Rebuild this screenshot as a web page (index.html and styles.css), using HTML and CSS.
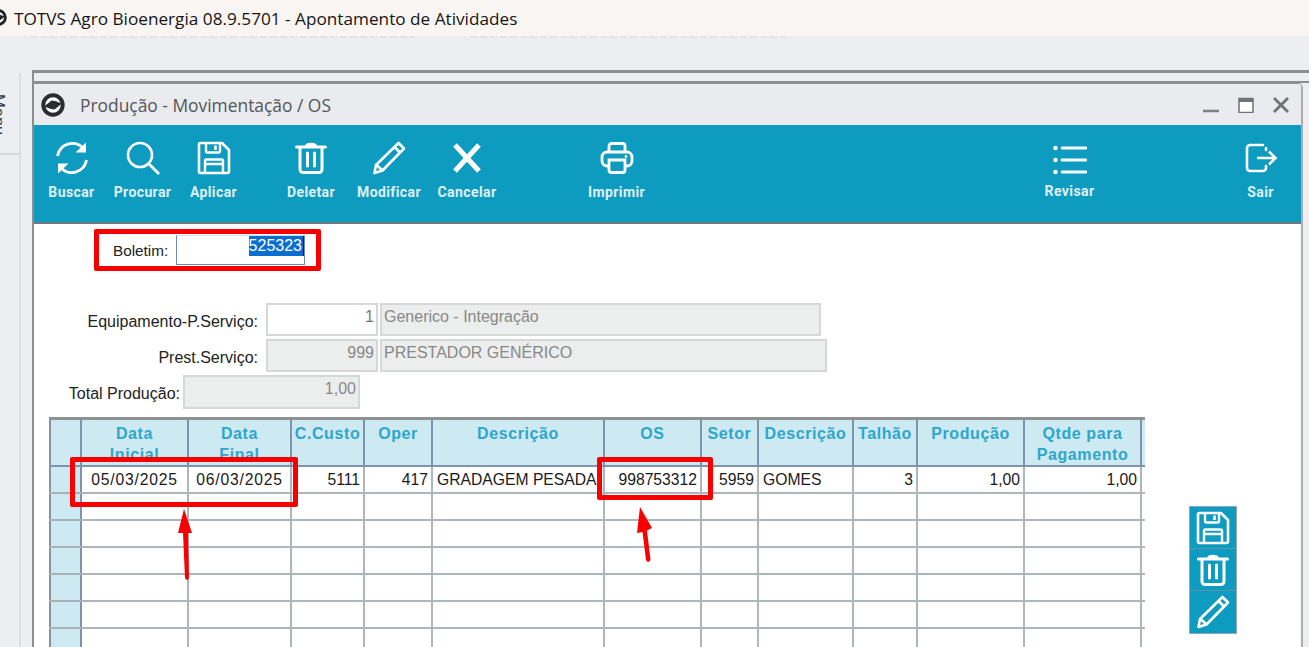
FILE: index.html
```html
<!DOCTYPE html>
<html lang="pt">
<head>
<meta charset="utf-8">
<title>TOTVS Agro Bioenergia</title>
<link rel="stylesheet" href="styles.css">
</head>
<body>
<svg class="defs" width="0" height="0" aria-hidden="true">
  <symbol id="i-logo" viewBox="0 0 24 24">
    <circle cx="12" cy="12" r="9.700" fill="#fff" stroke="currentColor" stroke-width="4"/>
    <path d="M3 13.500 10.500 7.500 14 8 21 10.500 13.500 16.500 10 16z" fill="currentColor"/>
  </symbol>
  <symbol id="i-save" viewBox="0 0 34 34">
    <path d="M2 3.500A1.500 1.500 0 0 1 3.500 2H25l7 7v21.500a1.500 1.500 0 0 1-1.500 1.500h-27A1.500 1.500 0 0 1 2 30.500z" fill="none" stroke="#fff" stroke-width="2.600" stroke-linejoin="round"/>
    <path d="M9 2v8a1.500 1.500 0 0 0 1.500 1.500h11A1.500 1.500 0 0 0 23 10V2M8 32V20a1.500 1.500 0 0 1 1.500-1.500h15A1.500 1.500 0 0 1 26 20v12M8 23h18" fill="none" stroke="#fff" stroke-width="2.400"/>
    <path d="M18.500 4.500v4.500" stroke="#fff" stroke-width="2.600"/>
  </symbol>
  <symbol id="i-trash" viewBox="0 0 34 34">
    <path d="M2.500 6h29" stroke="#fff" stroke-width="3" stroke-linecap="round"/>
    <path d="M12 5c.5-3 9.500-3 10 0" fill="#fff" stroke="#fff" stroke-width="2"/>
    <path d="M6 7v21.500a3 3 0 0 0 3 3h16a3 3 0 0 0 3-3V7" fill="none" stroke="#fff" stroke-width="3"/>
    <path d="M13.500 12v13M20.500 12v13" stroke="#fff" stroke-width="3" stroke-linecap="round"/>
  </symbol>
  <symbol id="i-pencil" viewBox="0 0 34 34">
    <path d="M26.500 2 32 7.500 10.500 29.500 2.500 32l1.500-8zM22.500 6l5.500 5.500M4.500 24l5.500 5" fill="none" stroke="#fff" stroke-width="2.600" stroke-linejoin="round"/>
  </symbol>
</svg>

<header class="app-title">
  <svg class="app-logo"><use href="#i-logo"/></svg>
  <span>TOTVS Agro Bioenergia 08.9.5701 - Apontamento de Atividades</span>
</header>
<div class="ghost"><i></i><i></i></div>

<div class="desk">
  <aside class="side-menu"><div class="side-tab"><span class="side-label">Menu</span></div></aside>
  <main class="mdi">
    <section class="window">
      <div class="win-title">
        <svg class="win-logo"><use href="#i-logo"/></svg>
        <span class="win-name">Produção - Movimentação / OS</span>
        <div class="win-controls">
          <svg width="16" height="16" viewBox="0 0 16 16"><path d="M0 14h16" stroke="#7c7f83" stroke-width="2.400"/></svg>
          <svg width="16" height="16" viewBox="0 0 16 16"><path d="M1 1.500h14v14H1z" fill="#fff" stroke="#6f7276" stroke-width="1.500"/><path d="M1 3h14" stroke="#6f7276" stroke-width="4"/></svg>
          <svg width="16" height="16" viewBox="0 0 16 16"><path d="M1 1l14 14M15 1 1 15" stroke="#6f7276" stroke-width="2.800"/></svg>
        </div>
      </div>

      <nav class="toolbar">
        <button class="tool">
          <svg class="tool-icon" viewBox="0 0 34 34"><path d="M2.500 15A15 15 0 0 1 28 7M31.500 19A15 15 0 0 1 6 27" fill="none" stroke="#fff" stroke-width="2.800"/><path d="M20.500 11.500H31V1.500zM13.500 22.500H3v10z" fill="#fff"/></svg>
          <span>Buscar</span>
        </button>
        <button class="tool">
          <svg class="tool-icon" viewBox="0 0 34 34"><circle cx="14" cy="14" r="12" fill="none" stroke="#fff" stroke-width="2.600"/><path d="M22.500 22.500 33 33" stroke="#fff" stroke-width="2.800"/></svg>
          <span>Procurar</span>
        </button>
        <button class="tool">
          <svg class="tool-icon"><use href="#i-save"/></svg>
          <span>Aplicar</span>
        </button>
        <div class="tool-group">
          <button class="tool wide">
            <svg class="tool-icon"><use href="#i-trash"/></svg>
            <span>Deletar</span>
          </button>
          <button class="tool wide">
            <svg class="tool-icon"><use href="#i-pencil"/></svg>
            <span>Modificar</span>
          </button>
          <button class="tool wide">
            <svg class="tool-icon" viewBox="0 0 34 34"><path d="M5 4l24 26M29 4 5 30" stroke="#fff" stroke-width="5"/></svg>
            <span>Cancelar</span>
          </button>
        </div>
        <button class="tool print">
          <svg class="tool-icon" viewBox="0 0 34 34"><path d="M9 11V5a2.500 2.500 0 0 1 2.500-2.500h11A2.500 2.500 0 0 1 25 5v6" fill="none" stroke="#fff" stroke-width="2.800"/><path d="M9 25H7a5 5 0 0 1-5-5v-4a5 5 0 0 1 5-5h20a5 5 0 0 1 5 5v4a5 5 0 0 1-5 5h-2" fill="none" stroke="#fff" stroke-width="2.800"/><path d="M9 19h16v10a2.500 2.500 0 0 1-2.500 2.500h-11A2.500 2.500 0 0 1 9 29z" fill="none" stroke="#fff" stroke-width="2.800"/><circle cx="26" cy="15.500" r="1.400" fill="#fff"/></svg>
          <span>Imprimir</span>
        </button>
        <button class="tool review">
          <svg class="tool-icon" viewBox="0 0 34 34"><path d="M9 7h24M9 19h24M9 31h24" stroke="#fff" stroke-width="2.800" stroke-linecap="round"/><circle cx="2.500" cy="7" r="2.200" fill="#fff"/><circle cx="2.500" cy="19" r="2.200" fill="#fff"/><circle cx="2.500" cy="31" r="2.200" fill="#fff"/></svg>
          <span>Revisar</span>
        </button>
        <button class="tool">
          <svg class="tool-icon" viewBox="0 0 34 34"><path d="M19 4H6a3 3 0 0 0-3 3v20a3 3 0 0 0 3 3h13a3 3 0 0 0 3-3v-2M22 9V7" fill="none" stroke="#fff" stroke-width="2.600" stroke-linecap="round"/><path d="M13 17h18M25 10.500l6.500 6.500-6.500 6.500" fill="none" stroke="#fff" stroke-width="2.600"/></svg>
          <span>Sair</span>
        </button>
      </nav>

      <div class="content">
        <div class="form-row boletim">
          <label class="lbl lbl-b">Boletim:</label>
          <div class="field field-boletim"><span class="selected">525323</span></div>
        </div>
        <div class="form-row equip">
          <label class="lbl lbl-e">Equipamento-P.Serviço:</label>
          <div class="field code white">1</div>
          <div class="field desc d1">Generico - Integração</div>
        </div>
        <div class="form-row prest">
          <label class="lbl lbl-e">Prest.Serviço:</label>
          <div class="field code">999</div>
          <div class="field desc d2">PRESTADOR GENÉRICO</div>
        </div>
        <div class="form-row total">
          <label class="lbl lbl-t">Total Produção:</label>
          <div class="field sum">1,00</div>
        </div>

        <div class="grid-wrap">
          <table class="grid">
            <colgroup>
              <col class="c0"><col class="c1"><col class="c2"><col class="c3"><col class="c4"><col class="c5"><col class="c6"><col class="c7"><col class="c8"><col class="c9"><col class="c10"><col class="c11"><col class="c12">
            </colgroup>
            <thead>
              <tr>
                <th></th><th>Data<br>Inicial</th><th>Data<br>Final</th><th>C.Custo</th><th>Oper</th><th>Descrição</th><th>OS</th><th>Setor</th><th>Descrição</th><th>Talhão</th><th>Produção</th><th>Qtde para<br>Pagamento</th><th class="stub"></th>
              </tr>
            </thead>
            <tbody>
              <tr><th></th><td class="date">05/03/2025</td><td class="date">06/03/2025</td><td class="num">5111</td><td class="num">417</td><td>GRADAGEM PESADA</td><td class="num">998753312</td><td class="num">5959</td><td>GOMES</td><td class="num">3</td><td class="num">1,00</td><td class="num">1,00</td><td class="stub"></td></tr>
              <tr><th></th><td></td><td></td><td></td><td></td><td></td><td></td><td></td><td></td><td></td><td></td><td></td><td class="stub"></td></tr>
              <tr><th></th><td></td><td></td><td></td><td></td><td></td><td></td><td></td><td></td><td></td><td></td><td></td><td class="stub"></td></tr>
              <tr><th></th><td></td><td></td><td></td><td></td><td></td><td></td><td></td><td></td><td></td><td></td><td></td><td class="stub"></td></tr>
              <tr><th></th><td></td><td></td><td></td><td></td><td></td><td></td><td></td><td></td><td></td><td></td><td></td><td class="stub"></td></tr>
              <tr><th></th><td></td><td></td><td></td><td></td><td></td><td></td><td></td><td></td><td></td><td></td><td></td><td class="stub"></td></tr>
              <tr><th></th><td></td><td></td><td></td><td></td><td></td><td></td><td></td><td></td><td></td><td></td><td></td><td class="stub"></td></tr>
            </tbody>
          </table>
          <div class="row-tools">
            <button class="row-tool"><svg><use href="#i-save"/></svg></button>
            <button class="row-tool"><svg><use href="#i-trash"/></svg></button>
            <button class="row-tool"><svg><use href="#i-pencil"/></svg></button>
          </div>
        </div>
      </div>
    </section>
  </main>
</div>

<div class="mark mark-boletim"></div>
<div class="mark mark-datas"></div>
<div class="mark mark-os"></div>
<svg class="arrow arrow-datas" width="16" height="74" viewBox="0 0 16 74"><path d="M6 0 14 24H10L11 69Q9 73 7 69L5 24H0Z" fill="#f90000"/></svg>
<svg class="arrow arrow-os" width="18" height="60" viewBox="0 0 18 60"><path d="M4 1 16 22 11 24.500 14.500 54Q12 58 10 54L6.500 26 1 27Z" fill="#f90000"/></svg>
</body>
</html>
```
FILE: styles.css
```css
* { box-sizing: border-box; }
html, body { margin: 0; height: 647px; overflow: hidden; }
body { background: #eceef2; font-family: "Liberation Sans", Arial, sans-serif; position: relative; display: flex; flex-direction: column; }
.defs { position: absolute; }

.app-title { height: 36px; flex: none; background: #f9f5f2; display: flex; align-items: center; font: 17.2px "Open Sans", sans-serif; color: #151515; padding-left: 14px; position: relative; white-space: nowrap; }
.app-logo { position: absolute; left: -10px; top: 9px; width: 17px; height: 17px; color: #222; }
.ghost { position: absolute; top: 36px; left: 30px; width: 760px; height: 2px; display: flex; gap: 55px; opacity: .4; }
.ghost i { height: 2px; flex: 1; background: repeating-linear-gradient(90deg, #d3d5d8 0 7px, transparent 7px 10px); }
.ghost i:first-child { flex: 1.2; }

.desk { flex: 1; display: flex; min-height: 0; }
.side-menu { width: 21px; flex: none; margin-top: 37px; border-right: 2px solid #dcdee1; overflow: hidden; }
.side-tab { height: 82px; width: 19px; border-bottom: 2px solid #d5d7da; padding-top: 21px; }
.side-label { display: block; writing-mode: vertical-rl; margin-left: -9px; font: 16.5px/16px "Liberation Sans", sans-serif; color: #3a3d42; }

.mdi { flex: 1; margin: 34px 0 0 11px; border-top: 3px solid #8b8d90; border-left: 2px solid #8b8d90; min-width: 0; display: flex; flex-direction: column; overflow: hidden; background: #eceef2; }
.mdi::before { content: ""; display: block; flex: none; height: 8px; border-bottom: 2px solid #8b8d90; }
.window { flex: 1; min-height: 0; margin-right: 6px; background: #fff; border-top: 1px solid #8e9296; border-right: 2px solid #a9acb0; border-top-right-radius: 5px; overflow: hidden; }

.win-title { height: 41px; background: #e9ebee; display: flex; align-items: center; padding-left: 7px; }
.win-logo { width: 24px; height: 24px; color: #2a2c2e; margin-right: 15px; }
.win-name { font: 17.4px "Open Sans", sans-serif; color: #55565a; }
.win-controls { margin-left: auto; display: flex; gap: 19px; padding-right: 12px; }

.toolbar { height: 99px; background: #0e9bc0; border-bottom: 2px solid #6f7a80; display: flex; padding-left: 2px; padding-right: 5px; }
.tool { width: 71px; height: 95px; background: none; border: 0; padding: 16px 0 0; display: flex; flex-direction: column; align-items: center; font: 700 14px Roboto, sans-serif; letter-spacing: .4px; color: #eef9fc; }
.tool span { margin-top: 10px; line-height: 15px; opacity: .92; }
.tool-icon { width: 34px; height: 34px; flex: none; }
.tool-group { display: flex; margin-left: 23px; }
.tool.wide { width: 78px; }
.tool.print { margin-left: 75px; }
.tool.review { margin-left: auto; margin-right: 120px; }
.tool.review span { margin-top: 9px; }

.content { padding-top: 11px; }
.form-row { display: flex; align-items: flex-start; }
.lbl { font-size: 16px; color: #222; text-align: right; white-space: nowrap; }
.field { height: 33px; background: #eceeed; border: 2px solid #d6d8d7; color: #888; font-size: 16px; padding: 2px 2px 0; line-height: 20px; }
.boletim { padding-left: 79px; height: 32px; }
.lbl-b { width: 55px; font-size: 15.3px; margin-top: 7px; margin-right: 8px; }
.field-boletim { width: 129px; height: 30px; background: #fff; border: 1px solid #6d8cb5; border-top-color: #d6e0ec; text-align: right; padding: 0; color: #fff; line-height: 20px; }
.selected { display: inline-block; background: #0a6ed1; padding: 0 1px 0 0; border-right: 1px solid #111; }
.equip { margin-top: 36px; height: 36px; }
.prest { height: 36px; }
.total { height: 36px; }
.lbl-e { width: 224px; margin-right: 8px; margin-top: 10px; }
.lbl-t { width: 146px; margin-top: 10px; margin-right: 3px; }
.code { width: 112px; text-align: right; margin-right: 2px; }
.code.white { background: #fff; color: #777; }
.d1 { width: 441px; }
.d2 { width: 447px; }
.sum { width: 177px; height: 34px; text-align: right; }

.grid-wrap { margin: 6px 0 0 15px; display: flex; align-items: flex-start; }
.grid { table-layout: fixed; border-collapse: collapse; width: 1095px; border-top: 3px solid #8f9193; border-left: 2px solid #8f9193; font-size: 15.7px; flex: none; }
.c0 { width: 31px; } .c1 { width: 107px; } .c2 { width: 103px; } .c3 { width: 73px; } .c4 { width: 68px; } .c5 { width: 172px; } .c6 { width: 97px; } .c7 { width: 57px; } .c8 { width: 95px; } .c9 { width: 64px; } .c10 { width: 107px; } .c11 { width: 117px; } .c12 { width: 4px; }
.grid th { background: #cde9f2; border-right: 2px solid #7f93ad; border-bottom: 2px solid #7f93ad; color: #2ea6cc; font: 700 16px/21px "Liberation Sans", sans-serif; vertical-align: top; padding: 3px 0 0; height: 46px; overflow: hidden; letter-spacing: .6px; white-space: nowrap; }
.grid tbody th { height: 27px; border-bottom-color: #a8b0b8; padding: 0; }
.grid td { height: 27px; border-right: 2px solid #adb6bb; border-bottom: 2px solid #adb6bb; padding: 1px 3px 0 4px; color: #1a1a1a; white-space: nowrap; overflow: hidden; }
.grid td.num { text-align: right; }
.grid td.date { text-align: center; letter-spacing: .8px; padding: 1px 0 0; }
.grid .stub { border-right: 0; padding: 0; }

.row-tools { margin: 89px 0 0 44px; width: 48px; background: #0e9bc0; border: 1px solid #93a6c0; display: flex; flex-direction: column; flex: none; }
.row-tool { height: 42px; padding: 0; border: 0; background: none; display: flex; align-items: center; justify-content: center; border-bottom: 1px solid #5f93ad; }
.row-tool:last-child { border-bottom: 0; }
.row-tool svg { width: 34px; height: 34px; }

.mark { position: absolute; border: 5px solid #f90000; border-radius: 2px; pointer-events: none; }
.mark-boletim { left: 94px; top: 229px; width: 227px; height: 42px; }
.mark-datas { left: 70px; top: 457px; width: 228px; height: 50px; }
.mark-os { left: 597px; top: 457px; width: 116px; height: 43px; }
.arrow { position: absolute; }
.arrow-datas { left: 178px; top: 509px; }
.arrow-os { left: 636px; top: 506px; }
```
